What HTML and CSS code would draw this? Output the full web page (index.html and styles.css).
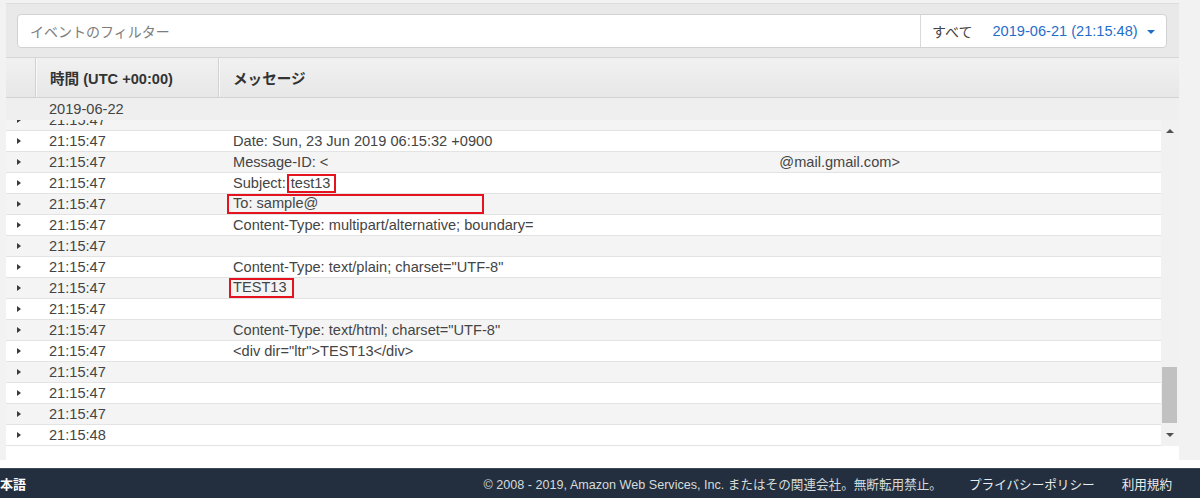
FILE: index.html
```html
<!DOCTYPE html>
<html lang="ja">
<head>
<meta charset="utf-8">
<title>CloudWatch Logs</title>
<link rel="stylesheet" href="styles.css">
</head>
<body>
<div class="page">
  <div class="panel">
    <div class="filterbar">
      <div class="filter">
        <div class="filter-input">イベントのフィルター</div>
        <div class="range">
          <span class="all">すべて</span>
          <span class="date">2019-06-21 (21:15:48)</span>
          <span class="caret"></span>
        </div>
      </div>
    </div>
    <div class="thead">
      <div class="th th-icon"></div>
      <div class="th th-time">時間 (UTC +00:00)</div>
      <div class="th th-msg">メッセージ</div>
    </div>
    <div class="daterow">2019-06-22</div>
    <div class="logs">
      <div class="rows">
        <div class="rows-inner">
          <div class="row"><span class="tri"></span><span class="time">21:15:47</span><span class="msg"></span></div>
          <div class="row"><span class="tri"></span><span class="time">21:15:47</span><span class="msg">Date: Sun, 23 Jun 2019 06:15:32 +0900</span></div>
          <div class="row"><span class="tri"></span><span class="time">21:15:47</span><span class="msg">Message-ID: &lt;<span class="redacted"></span>@mail.gmail.com&gt;</span></div>
          <div class="row"><span class="tri"></span><span class="time">21:15:47</span><span class="msg">Subject:<span class="hl hl-subject">test13</span></span></div>
          <div class="row"><span class="tri"></span><span class="time">21:15:47</span><span class="msg"><span class="hl hl-to">To: sample@</span></span></div>
          <div class="row"><span class="tri"></span><span class="time">21:15:47</span><span class="msg">Content-Type: multipart/alternative; boundary=</span></div>
          <div class="row"><span class="tri"></span><span class="time">21:15:47</span><span class="msg"></span></div>
          <div class="row"><span class="tri"></span><span class="time">21:15:47</span><span class="msg">Content-Type: text/plain; charset="UTF-8"</span></div>
          <div class="row"><span class="tri"></span><span class="time">21:15:47</span><span class="msg"><span class="hl hl-body">TEST13</span></span></div>
          <div class="row"><span class="tri"></span><span class="time">21:15:47</span><span class="msg"></span></div>
          <div class="row"><span class="tri"></span><span class="time">21:15:47</span><span class="msg">Content-Type: text/html; charset="UTF-8"</span></div>
          <div class="row"><span class="tri"></span><span class="time">21:15:47</span><span class="msg">&lt;div dir="ltr"&gt;TEST13&lt;/div&gt;</span></div>
          <div class="row"><span class="tri"></span><span class="time">21:15:47</span><span class="msg"></span></div>
          <div class="row"><span class="tri"></span><span class="time">21:15:47</span><span class="msg"></span></div>
          <div class="row"><span class="tri"></span><span class="time">21:15:47</span><span class="msg"></span></div>
          <div class="row"><span class="tri"></span><span class="time">21:15:48</span><span class="msg"></span></div>
        </div>
      </div>
      <div class="scrollbar">
        <div class="sb-btn"><span class="arrow-up"></span></div>
        <div class="sb-track"><div class="sb-thumb"></div></div>
        <div class="sb-btn"><span class="arrow-down"></span></div>
      </div>
    </div>
    <div class="panel-foot"></div>
  </div>
</div>
<footer class="footer">
  <span class="lang">本語</span>
  <div class="legal">
    <span class="copy">© 2008 - 2019, Amazon Web Services, Inc. またはその関連会社。無断転用禁止。</span>
    <span class="link">プライバシーポリシー</span>
    <span class="link">利用規約</span>
  </div>
</footer>
</body>
</html>
```

FILE: styles.css
```css
html, body {
  margin: 0;
  padding: 0;
}

body {
  background: #ffffff;
  font-family: "Liberation Sans", Arial, "Noto Sans CJK JP", sans-serif;
  font-size: 14.6px;
  color: #444444;
}

.page {
  height: 460px;
  box-sizing: border-box;
  padding: 3px 21px 0 6px;
  background: #f2f2f2;
}

.panel {
  height: 457px;
  display: flex;
  flex-direction: column;
  background: #ffffff;
}

/* filter bar */
.filterbar {
  height: 54px;
  box-sizing: border-box;
  border-top: 1px solid #dcdcdc;
  background: #e9e9e9;
  padding: 10px 12px 0 11px;
}

.filter {
  display: flex;
  height: 34px;
  box-sizing: border-box;
  background: #ffffff;
  border: 1px solid #d2d2d2;
  border-radius: 4px;
}

.filter-input {
  flex: 1;
  padding-left: 12px;
  line-height: 32px;
  color: #7d7d7d;
  font-family: "Noto Sans CJK JP", sans-serif;
  font-size: 14px;
}

.range {
  width: 246px;
  box-sizing: border-box;
  border-left: 1px solid #d9d9d9;
  display: flex;
  align-items: center;
  padding-left: 11px;
}

.all {
  color: #444444;
  font-family: "Noto Sans CJK JP", sans-serif;
  font-size: 14px;
  margin-right: 20px;
}

.date {
  color: #1f6ec8;
}

.caret {
  margin-left: 9px;
  margin-top: 2px;
  border-top: 4px solid #1f6ec8;
  border-left: 4px solid transparent;
  border-right: 4px solid transparent;
}

/* table header */
.thead {
  display: flex;
  height: 41px;
  box-sizing: border-box;
  border-top: 1px solid #d6d6d6;
  border-bottom: 1px solid #d3d3d3;
  background: linear-gradient(#f1f1f1, #e7e7e7);
  font-weight: bold;
  color: #333333;
}

.th {
  display: flex;
  align-items: center;
  box-sizing: border-box;
}

.th-icon {
  width: 30px;
  border-right: 1px solid #d2d2d2;
}

.th-time {
  width: 183px;
  padding-left: 14px;
  border-right: 1px solid #d2d2d2;
  box-shadow: inset 1px 0 0 #f8f8f8;
}

.th-msg {
  flex: 1;
  padding-left: 14px;
  box-shadow: inset 1px 0 0 #f8f8f8;
}

.daterow {
  height: 22px;
  line-height: 22px;
  padding-left: 43px;
  background: #efefef;
  color: #444444;
}

/* log rows */
.logs {
  display: flex;
  height: 326px;
}

.rows {
  flex: 1;
  overflow: hidden;
}

.rows-inner {
  margin-top: -10px;
}

.row {
  display: flex;
  align-items: center;
  height: 21px;
  box-sizing: border-box;
  border-bottom: 1px solid #e3e3e3;
  background: #ffffff;
}

.row:nth-child(odd) {
  background: #f4f4f4;
}

.tri {
  width: 0;
  height: 0;
  margin-left: 11px;
  margin-right: 15px;
  border-left: 4px solid #3a3a3a;
  border-top: 3.5px solid transparent;
  border-bottom: 3.5px solid transparent;
}

.time {
  width: 183px;
  padding-left: 13px;
  box-sizing: border-box;
  flex: none;
}

.msg {
  display: flex;
  align-items: center;
  padding-left: 14px;
  white-space: pre;
}

.redacted {
  display: inline-block;
  width: 451px;
}

.hl {
  display: inline-block;
  box-sizing: border-box;
  border: 2px solid #e5121f;
  line-height: 15px;
}

.hl-subject {
  height: 19px;
  margin-left: 1px;
  padding: 0 3px 0 2px;
}

.hl-to {
  height: 20px;
  width: 257px;
  margin-left: -6px;
  padding-left: 4px;
}

.hl-body {
  height: 20px;
  width: 65px;
  margin-left: -4px;
  padding-left: 2px;
}

/* scrollbar */
.scrollbar {
  width: 18px;
  display: flex;
  flex-direction: column;
  background: #f1f1f1;
}

.sb-btn {
  height: 22px;
  display: flex;
  align-items: center;
  justify-content: center;
}

.arrow-up {
  border-bottom: 4px solid #505050;
  border-left: 4px solid transparent;
  border-right: 4px solid transparent;
}

.arrow-down {
  border-top: 4px solid #505050;
  border-left: 4px solid transparent;
  border-right: 4px solid transparent;
}

.sb-track {
  flex: 1;
  display: flex;
  flex-direction: column;
  justify-content: flex-end;
  padding: 0 2px 1px 1px;
}

.sb-thumb {
  height: 56px;
  background: #c1c1c1;
}

.panel-foot {
  flex: 1;
  background: #ffffff;
}

/* footer */
.footer {
  margin-top: 8px;
  height: 30px;
  box-sizing: border-box;
  border-top: 1px solid #3a4656;
  background: #232f3e;
  display: flex;
  align-items: center;
  justify-content: space-between;
  font-family: "Liberation Sans", Arial, "Noto Sans CJK JP", sans-serif;
  font-size: 12.6px;
}

.lang {
  color: #ffffff;
  font-weight: bold;
  font-size: 13px;
  font-family: "Noto Sans CJK JP", sans-serif;
}

.legal {
  display: flex;
  align-items: center;
  gap: 27px;
  padding-right: 28px;
}

.copy {
  color: #d5dbdb;
}

.link {
  color: #eaeded;
}
```
